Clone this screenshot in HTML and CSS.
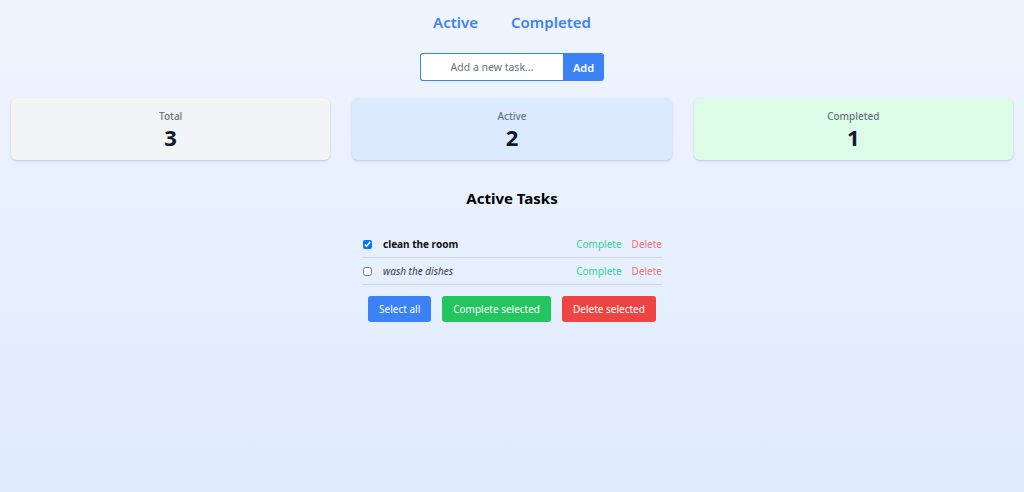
FILE: index.html
```html
<!DOCTYPE html>
<html>
<head>
<meta charset="utf-8">
<link rel="stylesheet" href="styles.css">
</head>
<body>
<div class="page">
  <nav class="tabs">
    <a class="tab">Active</a>
    <a class="tab">Completed</a>
  </nav>
  <form class="add-form">
    <input class="add-input" type="text" placeholder="Add a new task...">
    <button class="add-btn" type="button">Add</button>
  </form>
  <div class="stats">
    <div class="card card-total"><div class="card-label">Total</div><div class="card-num">3</div></div>
    <div class="card card-active"><div class="card-label">Active</div><div class="card-num">2</div></div>
    <div class="card card-done"><div class="card-label">Completed</div><div class="card-num">1</div></div>
  </div>
  <h2 class="section-title">Active Tasks</h2>
  <ul class="tasks">
    <li class="task">
      <input type="checkbox" class="check" checked>
      <span class="task-text bold">clean the room</span>
      <span class="act act-complete">Complete</span>
      <span class="act act-delete">Delete</span>
    </li>
    <li class="task">
      <input type="checkbox" class="check">
      <span class="task-text italic">wash the dishes</span>
      <span class="act act-complete">Complete</span>
      <span class="act act-delete">Delete</span>
    </li>
  </ul>
  <div class="bulk">
    <button class="btn btn-blue">Select all</button>
    <button class="btn btn-green">Complete selected</button>
    <button class="btn btn-red">Delete selected</button>
  </div>
</div>
</body>
</html>
```
FILE: styles.css
```css
* { box-sizing: border-box; }
html, body { margin: 0; height: 100%; }
body {
  font-family: "Noto Sans", "Open Sans", sans-serif;
  background: linear-gradient(180deg, #eff5fe 0%, #dfeafd 100%);
  min-height: 492px;
}
.page {
  display: flex;
  flex-direction: column;
  align-items: center;
  padding: 10px 11px 0;
}
.tabs {
  display: flex;
  gap: 33px;
  height: 24px;
  align-items: center;
}
.tab {
  color: #3b82f6;
  font-size: 15px;
  font-weight: 600;
}
.add-form {
  display: flex;
  margin-top: 19px;
  height: 28px;
}
.add-input {
  width: 143px;
  border: 1px solid #3b82f6;
  border-right: none;
  border-radius: 3px 0 0 3px;
  font-family: inherit;
  font-size: 10.5px;
  text-align: center;
  padding: 0 8px;
  background: #fff;
  outline: none;
}
.add-input::placeholder { color: #6b7280; }
.add-btn {
  width: 41px;
  background: #3b82f6;
  color: #fff;
  border: none;
  border-radius: 0 3px 3px 0;
  font-family: inherit;
  font-weight: 600;
  font-size: 11px;
}
.stats {
  display: grid;
  grid-template-columns: repeat(3, 1fr);
  gap: 22px;
  width: 100%;
  margin-top: 17px;
}
.card {
  height: 62px;
  border-radius: 6px;
  box-shadow: 0 1px 3px rgba(0,0,0,0.12), 0 1px 2px rgba(0,0,0,0.06);
  display: flex;
  flex-direction: column;
  align-items: center;
  padding-top: 11px;
}
.card-total { background: #f3f4f6; }
.card-active { background: #dbeafe; }
.card-done { background: #dcfce7; }
.card-label {
  font-size: 10px;
  color: #6b7280;
  font-weight: 500;
  line-height: 14px;
}
.card-num {
  font-size: 22px;
  font-weight: 700;
  color: #111827;
  line-height: 28px;
}
.section-title {
  font-size: 15px;
  font-weight: 700;
  margin: 27px 0 0;
  line-height: 22px;
  color: #000;
}
.tasks {
  list-style: none;
  margin: 22px 0 0;
  padding: 0;
  width: 300px;
}
.task {
  display: flex;
  align-items: center;
  height: 27px;
  border-bottom: 1px solid #d1d5db;
  font-size: 10px;
}
.check {
  width: 9px;
  height: 9px;
  margin: 0 11px 0 1px;
}
.task-text { flex: 1; color: #111; }
.bold { font-weight: 700; }
.italic { font-style: italic; color: #374151; }
.act { margin-left: 10px; }
.act-complete { color: #34d399; }
.act-delete { color: #f87171; }
.bulk {
  display: flex;
  gap: 11px;
  margin-top: 11px;
}
.btn {
  height: 26px;
  border: none;
  border-radius: 3px;
  color: #fff;
  font-family: inherit;
  font-size: 10px;
  padding: 0 11px;
}
.btn-blue { background: #3b82f6; }
.btn-green { background: #22c55e; }
.btn-red { background: #ef4444; }
```
